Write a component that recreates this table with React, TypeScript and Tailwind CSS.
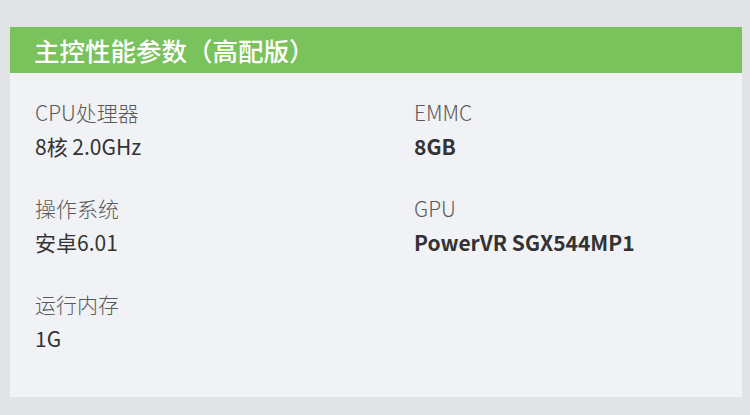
const specs = [
  { label: "CPU处理器", value: "8核 2.0GHz", bold: false },
  { label: "EMMC", value: "8GB", bold: true },
  { label: "操作系统", value: "安卓6.01", bold: false },
  { label: "GPU", value: "PowerVR SGX544MP1", bold: true },
  { label: "运行内存", value: "1G", bold: false },
];

export default function App() {
  return (
    <div
      className="w-[750px] h-[415px] bg-[#e2e3e7] pt-[27px] pl-[10px]"
      style={{ fontFamily: '"Noto Sans CJK SC", "Noto Sans", sans-serif' }}
    >
      <div className="w-[732px] h-[370px] bg-[#f1f2f6]">
        <div className="h-[46px] bg-[#7ac25c] flex items-center px-[24px]">
          <span className="text-[25.5px] font-medium text-white leading-none">
            主控性能参数（高配版）
          </span>
        </div>
        <div className="grid grid-cols-[379px_1fr] gap-y-[28px] px-[25px] pt-[22px]">
          {specs.map((s) => (
            <div key={s.label} className="flex flex-col">
              <div className="h-[34px] leading-[34px] text-[21px] font-light text-[#5a5a5a]">
                {s.label}
              </div>
              <div
                className={
                  s.bold
                    ? "h-[34px] leading-[34px] text-[21px] font-bold text-[#333333]"
                    : "h-[34px] leading-[34px] text-[21px] font-normal text-[#333333]"
                }
              >
                {s.value}
              </div>
            </div>
          ))}
        </div>
      </div>
    </div>
  );
}
